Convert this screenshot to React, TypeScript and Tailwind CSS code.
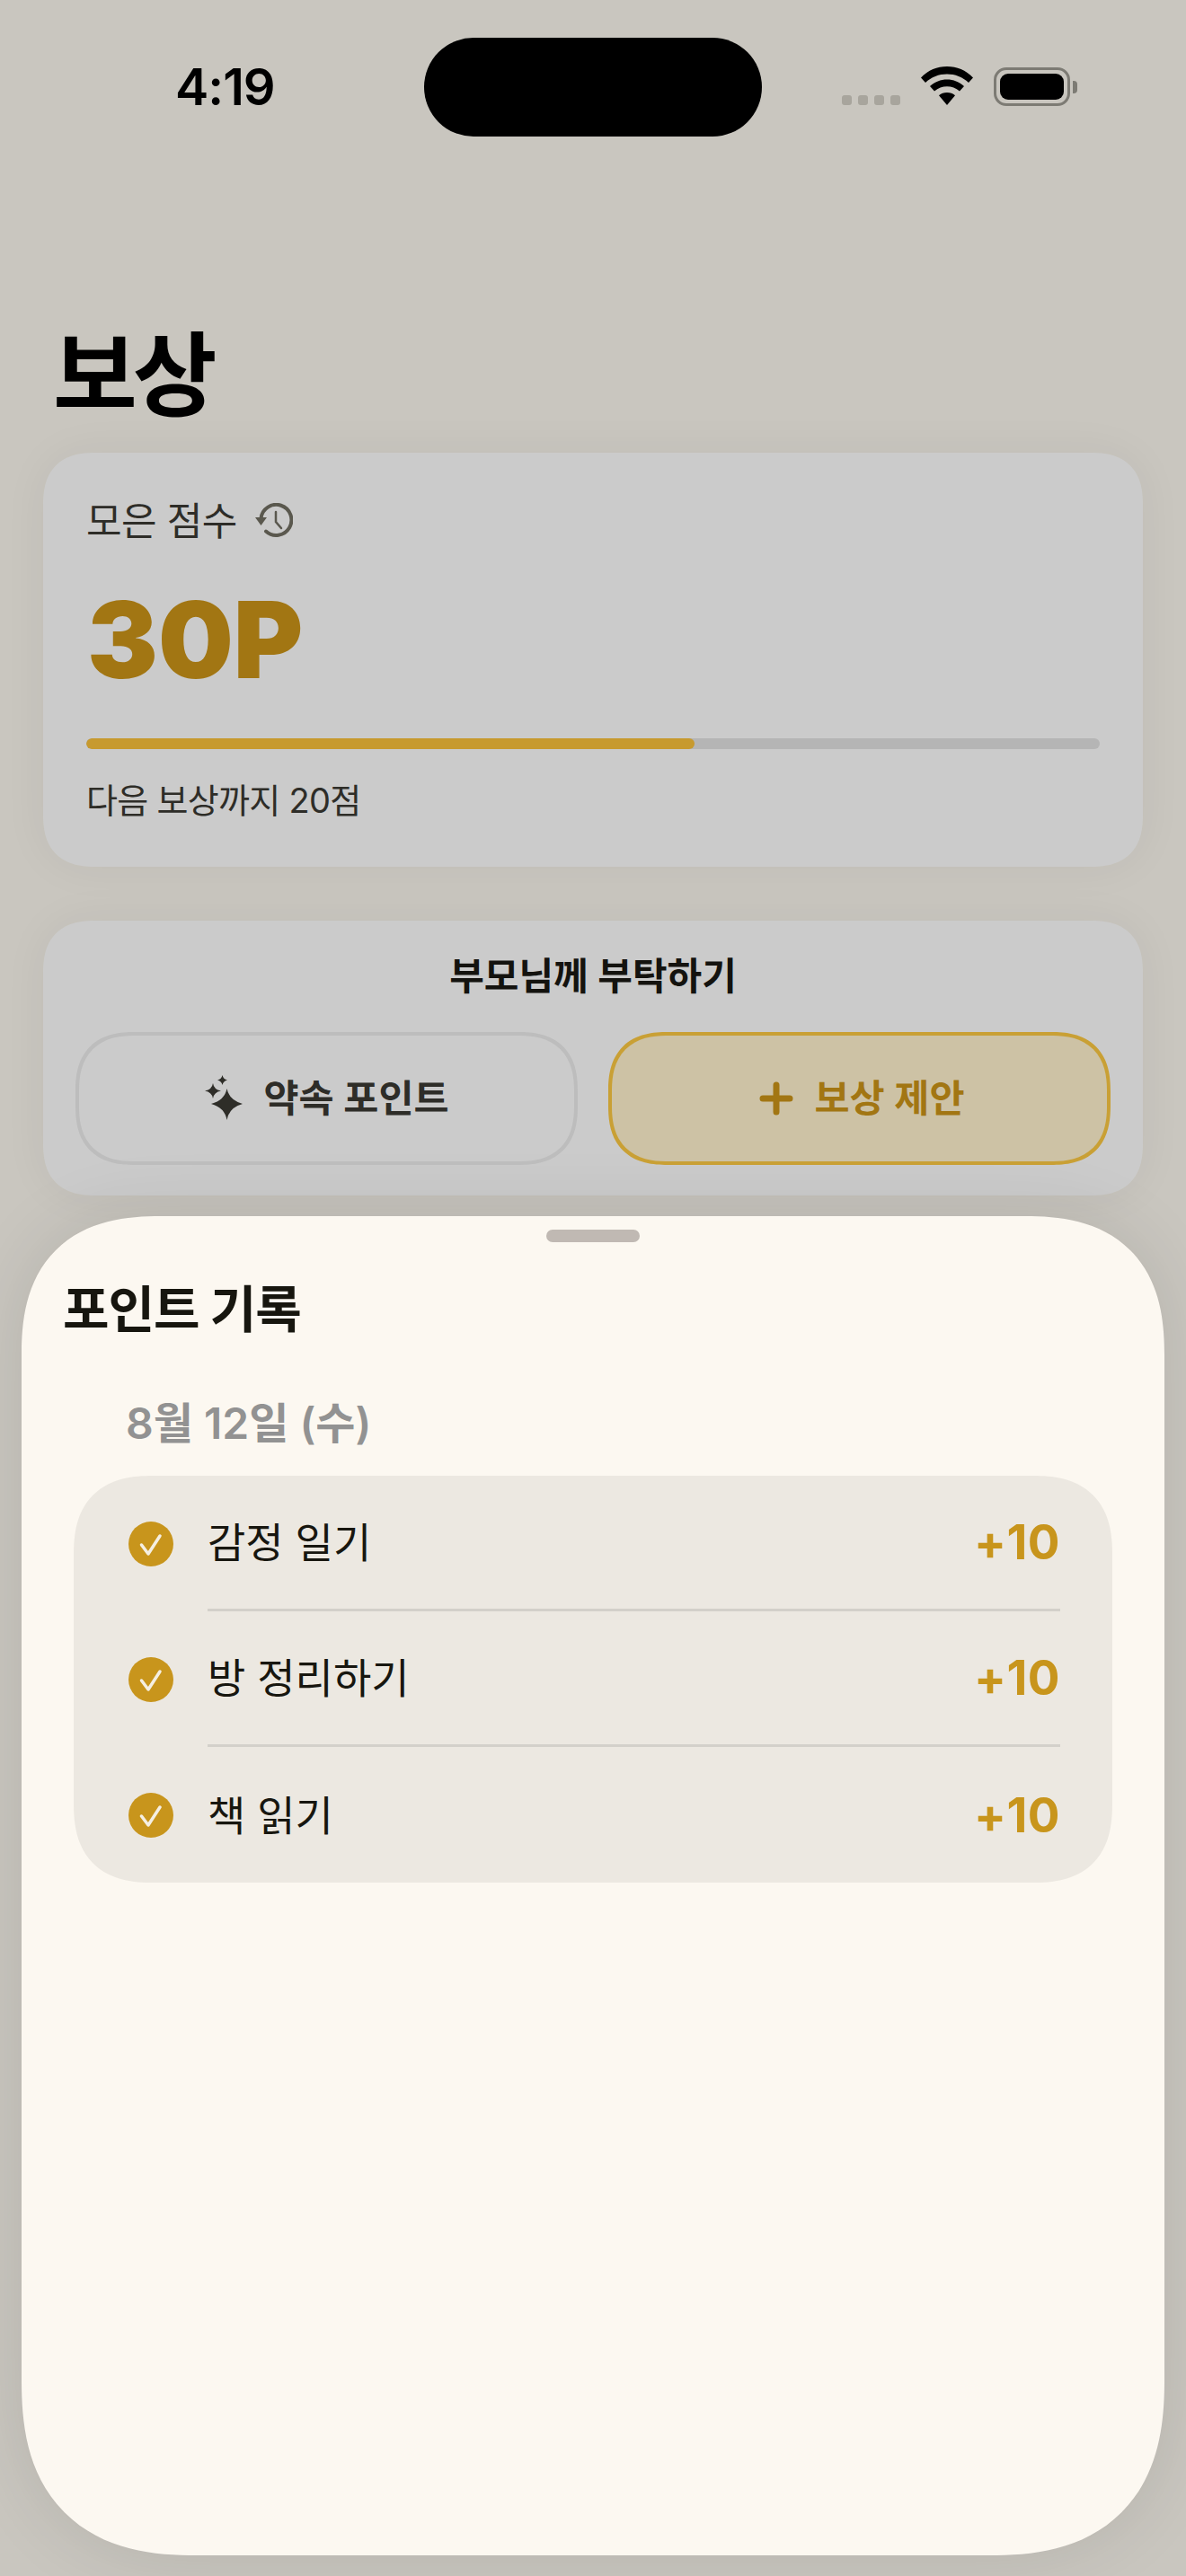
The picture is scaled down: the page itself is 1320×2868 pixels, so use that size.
const records = ["감정 일기", "방 정리하기", "책 읽기"];

const StatusIcons = () => (
    <div className="flex w-[262px] items-start pt-[33px]">
        <div className="mt-[31px] flex gap-[7px]">
            <span className="h-[11px] w-[11px] rounded-[3px] bg-[#a8a59d]" />
            <span className="h-[11px] w-[11px] rounded-[3px] bg-[#a8a59d]" />
            <span className="h-[11px] w-[11px] rounded-[3px] bg-[#a8a59d]" />
            <span className="h-[11px] w-[11px] rounded-[3px] bg-[#a8a59d]" />
        </div>
        <svg className="ml-[23px] mt-[-1px]" width="58" height="44" viewBox="0 0 58 44">
            <path d="M29 0C18 0 8 4 0 12.500L5 18C11.500 11.800 20 8.500 29 8.500C38 8.500 46.500 11.800 53 18L58 12.500C50 4 40 0 29 0Z" />
            <path d="M29 14.500C22 14.500 15.500 17 10 22L15 27.500C19 24 24 22.300 29 22.300C34 22.300 39 24 43 27.500L48 22C42.500 17 36 14.500 29 14.500Z" />
            <path d="M29 29C25.500 29 22.500 30 20 32.300L29 43L38 32.300C35.500 30 32.500 29 29 29Z" />
        </svg>
        <div className="ml-[23px] flex items-center">
            <div className="h-[43px] w-[85px] rounded-[14px] border-[3px] border-[#7d7b74] p-[4px]">
                <div className="h-full w-full rounded-[9px] bg-black" />
            </div>
            <span className="ml-[3px] h-[14px] w-[5px] rounded-r-[4px] bg-[#7d7b74]" />
        </div>
    </div>
);

const App = () => {
    return (
        <div className="h-[2868px] w-[1320px] overflow-hidden bg-[#c9c6bf] font-['Inter','Noto_Sans_CJK_KR',sans-serif] text-black">
            {/* STATUS BAR */}
            <div className="flex h-[152px] pt-[42px]">
                <div className="w-[472px] pl-[195px] pt-[27px] text-[56px] font-semibold leading-[56px] tracking-[-1px]">4:19</div>
                <div className="h-[110px] w-[376px] rounded-[55px] bg-black" />
                <div className="pl-[89px]">
                    <StatusIcons />
                </div>
            </div>

            <h1 className="ml-[59px] mt-[216px] text-[102px] font-bold leading-[100px] tracking-[-5px]">보상</h1>

            {/* POINTS */}
            <div className="mx-[48px] mt-[36px] h-[461px] rounded-[58px] bg-[#cbcbcb] px-[48px] pt-[46px] shadow-[0_0_50px_rgba(0,0,0,0.05)] [corner-shape:superellipse(1.3)]">
                <div className="flex h-[60px] items-center gap-[20px] text-[43px] leading-[60px] tracking-[-0.5px] text-[#2e2d28]">
                    <span>모은 점수</span>
                    <svg width="42" height="40" viewBox="0 0 42 40" fill="none" stroke="#5a584e" strokeWidth="4" strokeLinecap="round">
                        <path d="M6.500 17A17 17 0 1 1 12 31.500" />
                        <path d="M23 10V21L29 28" strokeWidth="2.500" />
                        <path d="M0 16H13L6.500 25Z" fill="#5a584e" stroke="none" />
                    </svg>
                </div>
                <div className="ml-[1px] mt-[42px] h-[120px] text-[118px] font-black leading-[120px] text-[#a27613]">30P</div>
                <div className="mt-[50px] h-[12px] w-full overflow-hidden rounded-[6px] bg-[#b5b5b5]">
                    <div className="h-full w-[60%] rounded-[6px] bg-[#c79a2f]" />
                </div>
                <div className="mt-[29px] text-[38px] leading-[56px] tracking-[-0.7px] text-[#2e2d28]">다음 보상까지 20점</div>
            </div>

            {/* ASK PARENTS */}
            <div className="mx-[48px] mt-[60px] h-[306px] rounded-[58px] bg-[#cbcbcb] px-[36px] pt-[34px] shadow-[0_0_50px_rgba(0,0,0,0.05)] [corner-shape:superellipse(1.3)]">
                <div className="h-[56px] text-center text-[42px] font-semibold leading-[56px] text-[#14130f]">부모님께 부탁하기</div>
                <div className="mt-[34px] flex gap-[34px]">
                    <button className="flex h-[148px] w-[560px] items-center justify-center gap-[22px] rounded-[66px] border-[4px] border-[#bdbdbd] text-[42.500px] font-semibold text-[#2e2d28] [corner-shape:superellipse(1.3)]">
                        <svg width="44" height="52" viewBox="0 0 44 52" fill="#2e2d28">
                            <path d="M20.500 0Q21.500 4.500 26 5.500Q21.500 6.500 20.500 11Q19.500 6.500 15 5.500Q19.500 4.500 20.500 0Z" />
                            <path d="M10 9Q11 16 19 17.500Q11 19 10 26Q9 19 1 17.500Q9 16 10 9Z" />
                            <path d="M25.500 15Q28 28 43 32Q28 36 25.500 50Q23 36 8 32Q23 28 25.500 15Z" />
                        </svg>
                        <span>약속 포인트</span>
                    </button>
                    <button className="flex h-[148px] w-[560px] items-center justify-center gap-[23px] rounded-[66px] border-[4px] border-[#c9a035] bg-[#cdc2a5] pl-[6px] text-[42.500px] font-semibold text-[#a27613] [corner-shape:superellipse(1.3)]">
                        <svg width="38" height="38" viewBox="0 0 38 38" stroke="#a27613" strokeWidth="7" strokeLinecap="round">
                            <path d="M19 4V34M4 19H34" />
                        </svg>
                        <span>보상 제안</span>
                    </button>
                </div>
            </div>

            {/* RECORD SHEET */}
            <div className="mx-[24px] mt-[23px] h-[1491px] rounded-b-[195px] rounded-t-[155px] bg-[#fcf8f1] pt-[15px] shadow-[0_0_80px_rgba(0,0,0,0.1)] [corner-shape:superellipse(1.3)]">
                <div className="mx-auto h-[14px] w-[104px] rounded-[7px] bg-[#c0b9b3]" />
                <div className="ml-[46px] mt-[35px] text-[56px] font-bold leading-[80px] tracking-[-1px] text-[#17160f]">포인트 기록</div>
                <div className="ml-[116px] mt-[54px] text-[48px] font-semibold leading-[66px] text-[#929292]">8월 12일 (수)</div>
                <div className="ml-[58px] mt-[25px] w-[1156px] rounded-[88px] bg-[#ece8e1] pl-[61px] pr-[58px] [corner-shape:superellipse(1.3)]">
                    {records.map((item, i) => (
                        <div key={item} className="flex h-[151px] items-center">
                            <svg className="shrink-0" width="50" height="50" viewBox="0 0 50 50" fill="none">
                                <circle cx="25" cy="25" r="25" fill="#c8951c" />
                                <path d="M14.500 26L22 36L35 16" stroke="#f5efe2" strokeWidth="3.500" strokeLinecap="round" strokeLinejoin="round" />
                            </svg>
                            <div className={i < records.length - 1 ? "ml-[38px] flex h-full flex-1 items-center justify-between border-b-[3px] border-[#d3d0ca]" : "ml-[38px] flex h-full flex-1 items-center justify-between"}>
                                <span className="text-[46px] leading-[60px] text-[#17160f]">{item}</span>
                                <span className="text-[53px] font-bold leading-[60px] tracking-[0.5px] text-[#c8951c]">+10</span>
                            </div>
                        </div>
                    ))}
                </div>
            </div>
        </div>
    );
};

export default App;
